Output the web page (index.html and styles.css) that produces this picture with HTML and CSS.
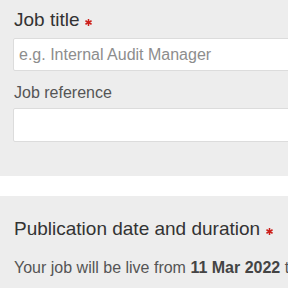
FILE: index.html
```html
<!DOCTYPE html>
<html>
<head>
<meta charset="utf-8">
<link rel="stylesheet" href="styles.css">
</head>
<body>
<section class="panel panel-first">
  <label class="heading">Job title<svg class="req" viewBox="0 0 8 8" width="7" height="7"><g stroke="#cc1f1a" stroke-width="1.7" stroke-linecap="butt"><line x1="4" y1="0" x2="4" y2="8"/><line x1="0.5" y1="2" x2="7.5" y2="6"/><line x1="0.5" y1="6" x2="7.5" y2="2"/></g></svg></label>
  <input class="field field-title" type="text" placeholder="e.g. Internal Audit Manager">
  <label class="label">Job reference</label>
  <input class="field field-ref" type="text">
</section>
<div class="gap"></div>
<section class="panel panel-second">
  <h2 class="heading">Publication date and duration<svg class="req" viewBox="0 0 8 8" width="7" height="7"><g stroke="#cc1f1a" stroke-width="1.7"><line x1="4" y1="0" x2="4" y2="8"/><line x1="0.5" y1="2" x2="7.5" y2="6"/><line x1="0.5" y1="6" x2="7.5" y2="2"/></g></svg></h2>
  <p class="text">Your job will be live from <b>11 Mar 2022</b> to <b>10 Apr 2022</b>.</p>
</section>
</body>
</html>
```
FILE: styles.css
```css
html, body {
  margin: 0;
  padding: 0;
  overflow: hidden;
  background: #ededed;
  font-family: "Liberation Sans", Arial, sans-serif;
}
.panel {
  background: #ededed;
  padding-left: 13px;
  overflow: hidden;
  display: flex;
  flex-direction: column;
  align-items: flex-start;
}
.panel-first {
  padding-top: 9px;
  padding-bottom: 34px;
}
.panel-second {
  padding-top: 22px;
  padding-bottom: 20px;
}
.gap {
  height: 20px;
  background: #ffffff;
}
.heading {
  display: block;
  margin: 0 0 0 1px;
  font-size: 19px;
  line-height: 22px;
  font-weight: normal;
  color: #333333;
  white-space: nowrap;
}
.req {
  margin-left: 6px;
  vertical-align: baseline;
}
.field {
  box-sizing: border-box;
  width: 320px;
  flex: none;
  border: 1px solid #dcdcdc;
  border-radius: 2px;
  background: #ffffff;
  font-family: "Liberation Sans", Arial, sans-serif;
  font-size: 16px;
  color: #333333;
  padding: 0 5px;
  margin: 0;
  outline: none;
}
.field::placeholder {
  color: #8d8d8d;
}
.field-title {
  margin-top: 7px;
  height: 33px;
}
.label {
  display: block;
  margin: 12px 0 0 1px;
  font-size: 16px;
  line-height: 20px;
  color: #555555;
}
.field-ref {
  margin-top: 5px;
  height: 34px;
}
.text {
  margin: 18px 0 0 1px;
  font-size: 16px;
  line-height: 20px;
  color: #555555;
  white-space: nowrap;
}
.text b {
  color: #444444;
}
```
